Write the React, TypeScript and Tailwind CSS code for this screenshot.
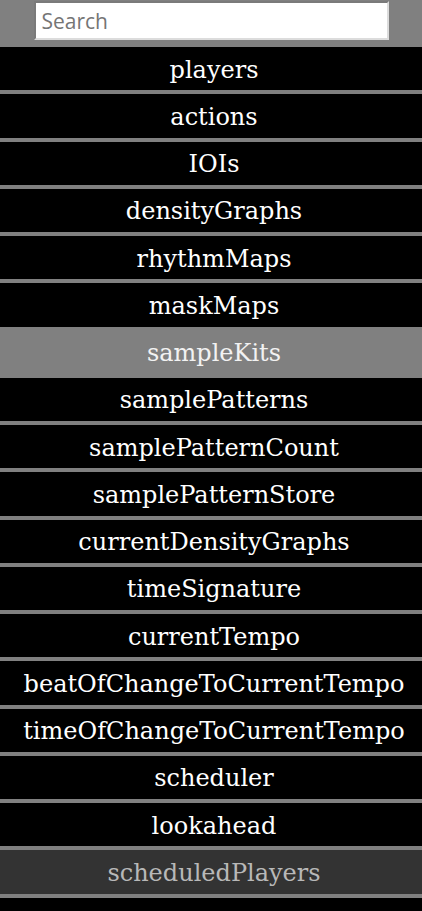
const items = [
  "players",
  "actions",
  "IOIs",
  "densityGraphs",
  "rhythmMaps",
  "maskMaps",
  "sampleKits",
  "samplePatterns",
  "samplePatternCount",
  "samplePatternStore",
  "currentDensityGraphs",
  "timeSignature",
  "currentTempo",
  "beatOfChangeToCurrentTempo",
  "timeOfChangeToCurrentTempo",
  "scheduler",
  "lookahead",
  "scheduledPlayers",
  "",
];

const App = () => {
  return (
    <div className="min-h-screen bg-[#808080] overflow-hidden">
      {/* Search */}
      <div className="h-[47px] flex justify-center pt-px">
        <input
          type="text"
          placeholder="Search"
          className="w-[355px] h-[39px] bg-white px-[6px] text-[21px] text-black placeholder:text-[#757575] border-2 border-t-[#7a7a7a] border-l-[#7a7a7a] border-b-[#dcdcdc] border-r-[#dcdcdc] outline-none font-['Open_Sans',sans-serif]"
        />
      </div>

      {/* Variable list */}
      <div className="flex flex-col gap-1">
        {items.map((name, i) => {
          const selected = name === "sampleKits";
          const dim = name === "scheduledPlayers";
          return (
            <button
              key={i}
              className={
                selected
                  ? "h-[43.25px] shrink-0 pt-[2px] pl-[6px] bg-[#808080] text-[#f2f2f2] text-[24px] font-['DejaVu_Serif',serif] whitespace-nowrap"
                  : dim
                  ? "h-[43.25px] shrink-0 pt-[2px] pl-[6px] bg-[#333333] text-[#b8b8b8] text-[24px] font-['DejaVu_Serif',serif] whitespace-nowrap"
                  : "h-[43.25px] shrink-0 pt-[2px] pl-[6px] bg-black text-white text-[24px] font-['DejaVu_Serif',serif] whitespace-nowrap"
              }
            >
              {name}
            </button>
          );
        })}
      </div>
    </div>
  );
};

export default App;
